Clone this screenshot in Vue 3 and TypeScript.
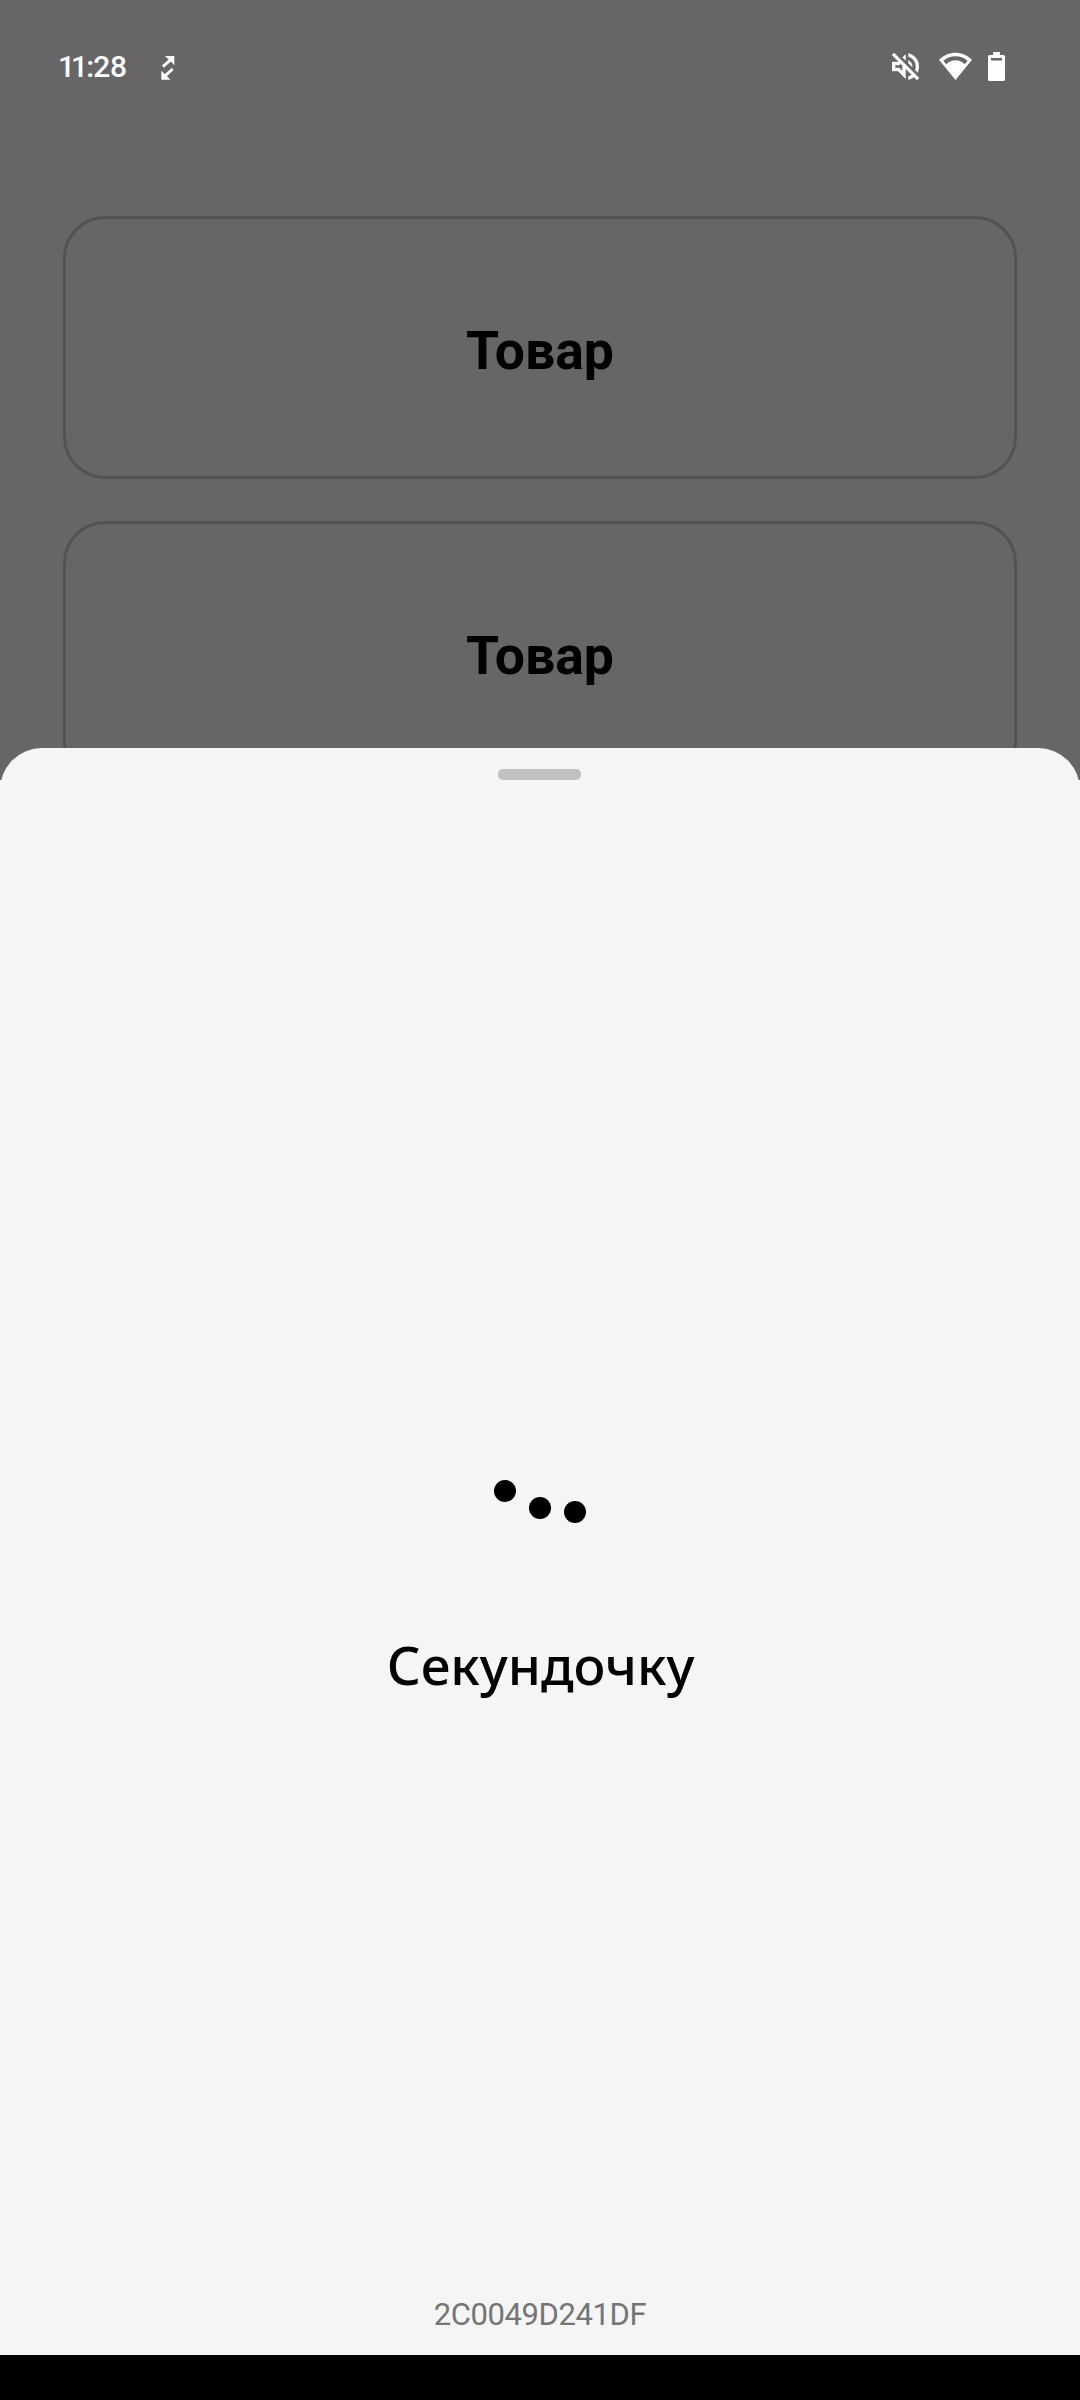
<script setup lang="ts">
const products: string[] = ['Товар', 'Товар']
const offsets: number[] = [0, 16.5, 21]
const deviceId = '2C0049D241DF'
</script>

<template>
  <div class="screen">
    <header class="status">
      <div class="left">
        <span class="time"><span class="tight">1</span><span class="one">1</span><span class="colon">:</span>28</span>
        <svg class="transfer" width="14" height="24" viewBox="0 0 14 24" fill="#fff">
          <path d="M4 0H13.300V9z" />
          <path d="M.3 14.800V23.700H9.500z" />
          <path d="M1.900 10.600L10 3.400M11.700 13L3.700 20.200" stroke="#fff" stroke-width="2.900" />
        </svg>
      </div>
      <div class="right">
        <svg class="mute" width="27" height="27" viewBox="2.93 2.93 18.14 18.14" fill="#fff" stroke="#fff" stroke-width=".3">
          <path fill-rule="evenodd" d="M4.34 2.93L2.93 4.34 7.29 8.7 7 9H3v6h4l5 5v-6.59l4.18 4.18c-.65.49-1.38.88-2.18 1.11v2.06c1.34-.3 2.57-.92 3.61-1.75l2.05 2.05 1.41-1.41L4.34 2.93zM10 15.17L7.83 13H5v-2h2.83l.88-.88L10 11.41v3.76zM19 12c0 .82-.15 1.61-.41 2.34l1.53 1.53c.56-1.17.88-2.48.88-3.87 0-4.28-2.99-7.86-7-8.77v2.06c2.89.86 5 3.54 5 6.71zm-7-8l-1.88 1.88L12 7.76zm4.5 8c0-1.77-1.02-3.29-2.5-4.03v1.79l2.48 2.48c.01-.08.02-.16.02-.24z" />
        </svg>
        <svg class="wifi" width="33" height="28" viewBox="0 0 33 28" fill="#fff">
          <path fill-rule="evenodd" d="M0 7.8C9.5-1.7 23.5-1.7 33 7.8L16.5 28zM4.4 8.7L7.2 12.2C12.5 7 20.5 7 25.8 12.2L28.6 8.7C21.5 2.8 11.5 2.8 4.4 8.7z" />
        </svg>
        <svg class="battery" width="17" height="29" viewBox="0 0 17 29" fill="#fff">
          <path fill-rule="evenodd" d="M5 0h7v3h3.4q1.6 0 1.6 1.6v22.8q0 1.6-1.6 1.6H1.6Q0 29 0 27.400V4.600Q0 3 1.600 3H5zM3 6v2.500h11V6z" />
        </svg>
      </div>
    </header>

    <main class="products">
      <div v-for="(name, i) in products" :key="i" class="card">{{ name }}</div>
    </main>

    <section class="sheet">
      <div class="handle"></div>
      <div class="dots">
        <span v-for="(y, i) in offsets" :key="i" class="dot" :style="{ marginTop: y + 'px' }"></span>
      </div>
      <p class="wait">Секундочку</p>
      <p class="device">{{ deviceId }}</p>
    </section>
    <footer class="nav"></footer>
  </div>
</template>

<style>
body {
  margin: 0;
}
</style>

<style scoped>
.screen {
  width: 1080px;
  height: 2400px;
  overflow: hidden;
  display: flex;
  flex-direction: column;
  background: linear-gradient(#676568 780px, #f5f5f5 780px);
  font-family: Roboto, sans-serif;
}
.status {
  flex: none;
  height: 216px;
  box-sizing: border-box;
  padding: 52px 75px 0 58px;
  display: flex;
  justify-content: space-between;
  align-items: flex-start;
}
.left,
.right {
  display: flex;
  align-items: flex-start;
  height: 30px;
}
.time {
  width: 103px;
  font-size: 30px;
  line-height: 30px;
  font-weight: 500;
  color: #fff;
  letter-spacing: -0.3px;
}
.tight {
  letter-spacing: -4px;
}
.one {
  letter-spacing: -2px;
}
.colon {
  letter-spacing: -0.8px;
}
.transfer {
  margin-top: 3.500px;
}
.mute {
  margin: 1px 20px 0 0;
}
.wifi {
  margin-right: 16px;
}
.products {
  flex: none;
  height: 532px;
  overflow: hidden;
  display: flex;
  flex-direction: column;
  gap: 42px;
  padding: 0 63px;
}
.card {
  flex: none;
  height: 263px;
  box-sizing: border-box;
  border: 3px solid #535154;
  border-radius: 42px;
  display: flex;
  align-items: center;
  justify-content: center;
  padding-top: 6px;
  font-size: 53.500px;
  font-weight: 700;
  color: #000;
}
.sheet {
  flex: none;
  height: 1607px;
  box-sizing: border-box;
  padding-top: 21px;
  border-radius: 42px 42px 0 0;
  background: #f5f5f5;
  display: flex;
  flex-direction: column;
  align-items: center;
}
.handle {
  width: 83px;
  height: 11px;
  margin-right: 1px;
  border-radius: 5px;
  background: #c1c1c1;
}
.dots {
  height: 44px;
  margin-top: 700px;
  display: flex;
  align-items: flex-start;
  gap: 13px;
}
.dot {
  width: 22px;
  height: 22px;
  border-radius: 50%;
  background: #000;
}
.wait {
  margin: 105px 0 0 1px;
  font-family: 'Noto Sans', sans-serif;
  font-size: 53px;
  line-height: 72px;
  font-weight: 500;
  color: #000;
}
.device {
  margin: auto 0 21px;
  font-size: 31px;
  line-height: 38px;
  letter-spacing: -0.4px;
  color: #757575;
}
.nav {
  flex: none;
  height: 45px;
  background: #000;
}
</style>
